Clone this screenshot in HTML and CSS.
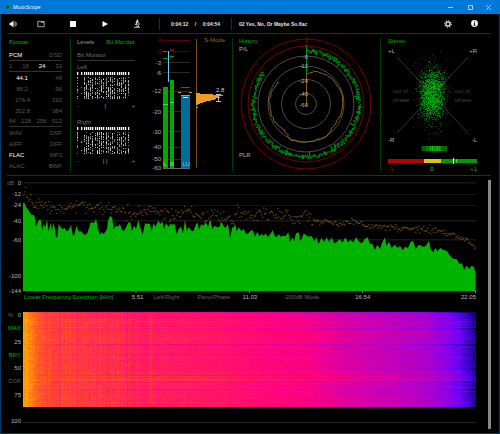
FILE: index.html
```html
<!DOCTYPE html>
<html lang="en">
<head>
<meta charset="utf-8">
<title>MusicScope</title>
<link rel="stylesheet" href="styles.css">
</head>
<body>
<div class="window">
  <header class="titlebar">
    <svg class="logo" width="6" height="6" viewBox="0 0 12 12"><circle cx="6" cy="6" r="6" fill="#0f8f86"/><path d="M3 9 5 3l2 5 2-4M6 2v8" stroke="#05313d" stroke-width="1.6" fill="none"/></svg>
    <h1>MusicScope</h1>
    <button aria-label="Minimize"><svg width="5" height="5" viewBox="0 0 5 5"><path d="M0 2.5h5"/></svg></button>
    <button aria-label="Maximize"><svg width="5" height="5" viewBox="0 0 5 5"><path d="M.5.5h4v4h-4z"/></svg></button>
    <button aria-label="Close"><svg width="5" height="5" viewBox="0 0 5 5"><path d="m.2.2 4.6 4.6m0-4.6L.2 4.8"/></svg></button>
  </header>

  <main class="content">
    <nav class="toolbar">
      <button class="volume" aria-label="Volume"><svg width="8" height="8" viewBox="0 0 16 16"><path d="M1 5.500h3L9 1v14l-5-4.500H1z" fill="#eee"/><path d="M11 5q2 3 0 6M13 3q3.500 5 0 10" stroke="#ddd" stroke-width="1.500" fill="none"/></svg></button>
      <button class="transport" aria-label="Open"><svg width="8" height="8" viewBox="0 0 16 16"><path d="M1.500 13.500v-11h5l1.500 2h6.500v9z" stroke="#ccc" stroke-width="1.600" fill="none"/><path d="M8 3h7" stroke="#ccc" stroke-width="1.600"/></svg></button>
      <button class="transport" aria-label="Stop"><svg width="6" height="6" viewBox="0 0 6 6"><path d="M0 0h6v6H0z" fill="#fff"/></svg></button>
      <button class="transport" aria-label="Play"><svg width="6" height="6" viewBox="0 0 6 6"><path d="M.5 0 6 3 .5 6z" fill="#fff"/></svg></button>
      <button class="transport" aria-label="Analyze"><svg width="8" height="9" viewBox="0 0 16 18"><path d="m8 1 3 1-3 8-3-1z" fill="#eee"/><path d="M10.500 6q4 4 0 8M4 11h5M2 16.500h12M6 14.500h6" stroke="#ddd" stroke-width="1.700" fill="none"/></svg></button>
      <div class="time"><span>0:04:12</span><span>/</span><span>0:04:54</span></div>
      <div class="track">02 Yes, No, Or Maybe So.flac</div>
      <button class="tool" aria-label="Settings"><svg width="8" height="8" viewBox="0 0 16 16"><circle cx="8" cy="8" r="4" stroke="#ccc" stroke-width="3" fill="none"/><circle cx="8" cy="8" r="6.400" stroke="#ccc" stroke-width="2.400" stroke-dasharray="2.500 2.520" fill="none"/></svg></button>
      <button class="tool" aria-label="Information"><svg width="7" height="7" viewBox="0 0 14 14"><circle cx="7" cy="7" r="6.800" fill="#fff"/><path d="M7 2.500v2M5.500 6H7v4.500M5 10.800h4" stroke="#000" stroke-width="1.800" fill="none"/></svg></button>
    </nav>

    <section class="panels">
      <section class="format">
        <h2>Format</h2>
        <div class="row ruled"><button class="on">PCM</button><button>DSD</button></div>
        <div class="row ruled"><button>1</button><button>16</button><button class="on">24</button><button>32</button></div>
        <div class="row rates"><button class="on">44.1</button><button>48</button></div>
        <div class="row rates"><button>88.2</button><button>96</button></div>
        <div class="row rates"><button>176.4</button><button>192</button></div>
        <div class="row rates"><button>352.8</button><button>384</button></div>
        <div class="row ruled"><button>64</button><button>128</button><button>256</button><button>512</button></div>
        <div class="row"><button>WAV</button><button>DSF</button></div>
        <div class="row"><button>AIFF</button><button>DFF</button></div>
        <div class="row"><button class="on">FLAC</button><button>MP3</button></div>
        <div class="row"><button>ALAC</button><button>BWF</button></div>
      </section>

      <section class="levels">
        <div class="bits">
          <div class="row tabs"><button class="tab">Levels</button><button class="tab active">Bit Monitor</button></div>
          <div class="row ruled"><span>Bit Monitor</span></div>
          <div class="row"><span>Left</span></div>
          <svg class="matrix" id="bits-left" viewBox="0 0 58 28"></svg>
          <div class="row balance"><span>-</span><span class="mark">|</span><span>+</span></div>
          <div class="row lower"><span>Right</span></div>
          <svg class="matrix" id="bits-right" viewBox="0 0 58 28"></svg>
          <div class="row balance"><span>-</span><span class="mark">| |</span><span>+</span></div>
        </div>
        <svg class="meter" viewBox="145 34 87 140">
          <g stroke="#2b2b2b"><path d="M163 62.500h27M163 72.500h27M163 91.500h27M163 111.500h27M163 131.500h27M163 147.500h27M163 159.500h27"/><path d="M163 168.500h27" stroke="#666"/></g>
          <path d="M163 40.500h27M163 51.500h27" stroke="#5c0000"/>
          <g class="scale" text-anchor="end">
            <text class="red" x="161" y="42">3</text><text class="red" x="161" y="53">0</text>
            <text x="161" y="65">-3</text><text x="161" y="75">-6</text><text x="161" y="93">-12</text><text x="161" y="114">-20</text><text x="161" y="134">-30</text><text x="161" y="149">-40</text><text x="161" y="161">-50</text><text x="161" y="170">-60</text>
          </g>
          <path d="M163 87h5v81h-5zM170 80h4v88h-4z" fill="#00a800"/>
          <path d="M163 104.500h5M170 102.500h4" stroke="#2bf52b"/>
          <path d="M163 58.500h4M170 56.500h4M163 51.500h4" stroke="#00a020"/>
          <path d="M170 49h4v2h-4z" fill="#900000"/>
          <path d="M168 51h1v31h-1z" fill="#6cc8f0"/>
          <path d="M181 95h9v73h-9z" fill="#006c9c"/>
          <path d="M181 95.500h9M178 92.500h3M189 92.500h3" stroke="#e39320"/>
          <path d="M183 97.500h5" stroke="#fff"/><path d="M181 87.500h9" stroke="#006c9c"/>
          <g class="barname" text-anchor="middle"><text x="165" y="166">L</text><text x="172" y="166">R</text><text x="186" y="166">LU</text></g>
          <path d="M196.500 39v129" stroke="#765012"/>
          <text class="smode" x="204" y="42">S-Mode</text>
          <path d="M196 93h4v1h13v1h10v1h-5v1h2v1h-4v1h-1v1h-4v1h-5v1h-3v1h-3v1h-2v1h-2v2h2v1h-2v-1z" fill="#eb9a24"/>
          <text class="value" x="216" y="92">2.8</text>
          <path d="M218.500 94v7M216 94.500h5M216 101.500h5" stroke="#bbb"/>
        </svg>
      </section>

      <section class="history">
        <svg viewBox="233 34 147 140">
          <g fill="none"><circle cx="306" cy="104" r="65" stroke="#7c0000"/><circle cx="306" cy="104" r="58" stroke="#7c0000"/><g stroke="#4b4b4b"><circle cx="306" cy="104" r="48"/><circle cx="306" cy="104" r="38"/><circle cx="306" cy="104" r="24.500"/><circle cx="306" cy="104" r="10.500"/></g></g>
          <path d="M306.500 45v35" stroke="#008a20"/><path d="M306.500 74v32" stroke="#8c5a18"/>
          <path id="peak-trace" stroke="#00a010" stroke-width=".8" fill="none"/>
          <path id="loudness-trace" stroke="#b87818" stroke-width=".8" fill="none"/>
          <g class="scale" text-anchor="end"><text class="red" x="308" y="42">3</text><text class="red" x="308" y="48">0</text><text x="308" y="59">-6</text><text x="308" y="68">-12</text><text x="308" y="83">-24</text><text x="308" y="96">-40</text><text x="308" y="107">-60</text></g>
          <text class="heading" x="239" y="43">History</text><text class="side" x="239" y="51">P/L</text><text class="side" x="239" y="157">PLR</text>
        </svg>
      </section>

      <section class="stereo">
        <svg viewBox="381 34 110 140">
          <text class="heading" x="388" y="43">Stereo</text>
          <path d="m397 57 71 76m0-76-71 76" stroke="#333" fill="none"/>
          <g class="faint"><text x="393" y="93">out of</text><text x="393" y="102">phase</text><text x="455" y="93">out of</text><text x="455" y="102">phase</text></g>
          <g id="cloud"></g>
          <g class="side"><text x="388" y="53">+L</text><text x="477" y="53" text-anchor="end">+R</text><text x="388" y="142">-R</text><text x="477" y="142" text-anchor="end">-L</text></g>
          <g id="pan"></g>
          <path d="M388 159h36v4h-36z" fill="#b80000"/><path d="M424 159h17v4h-17z" fill="#dcc800"/><path d="M441 159h36v4h-36z" fill="#009a00"/>
          <path d="M453 158h1v6h-1z" fill="#fff"/><path d="M456 159h1v4h-1z" fill="#6cc86c"/>
          <text class="red" x="388" y="171">-1</text><text class="yellow" x="432" y="171" text-anchor="middle">0</text><text class="heading" x="477" y="171" text-anchor="end">+1</text>
        </svg>
      </section>
    </section>

    <section class="analysis">
      <div class="charts">
        <svg class="axis" width="16" height="118" viewBox="7 176 16 118">
          <text class="dim" x="7" y="185">dB</text>
          <g text-anchor="end"><text x="21" y="185">0</text><text x="21" y="196">-12</text><text x="21" y="207">-24</text><text x="21" y="223">-40</text><text x="21" y="242">-60</text><text x="21" y="278">-100</text><text x="21" y="293">-144</text></g>
        </svg>
        <svg class="spectrum" viewBox="69 6 1359 354" preserveAspectRatio="none">
          <g id="grid"></g>
          <path id="spectrum-fill" fill="#00b400"/>
          <path id="spectrum-peak" stroke="#a87412" stroke-width="3" fill="none"/>
          <path d="M408 350v7M748 350v7M1088 350v7M1427 350v7" stroke="#888" stroke-width="3"/>
        </svg>
        <div class="legend">
          <button class="active">Linear Frequency Spectrum [kHz]</button><span class="tick">5.51</span><button>Left/Right</button><button>Pano/Phase</button><span class="tick">11.03</span><button>-200dB Mode</button><span class="tick">16.54</span><span class="tick last">22.05</span>
        </div>
        <div class="depth">
          <div><span class="dim">%</span><span>0</span></div><button class="active">MAX</button><span>25</span><button class="active">BRY</button><span>50</span><button>COF</button><span>75</span><span>&nbsp;</span><span>100</span>
        </div>
        <div class="gram"><canvas id="gram" width="453" height="95"></canvas></div>
      </div>
      <div class="scrollbar"></div>
    </section>
  </main>
</div>
<script src="script.js"></script>
</body>
</html>
```
FILE: styles.css
```css
* { box-sizing: border-box; }
body { margin: 0; background: #000; color: #b4b4b4; font: 6px/8px "Liberation Sans", Arial, sans-serif; }
button { margin: 0; padding: 0; border: 0; background: none; color: inherit; font: inherit; cursor: pointer; }
svg, canvas { display: block; }
h1, h2 { margin: 0; font: inherit; }
text { fill: #b4b4b4; }

.window { min-height: 100vh; display: flex; flex-direction: column; border: solid #063a66; border-width: 0 1px 1px; }
.titlebar { display: flex; align-items: center; height: 14px; margin: 0 -1px; padding: 0 6px 0 5px; background: #0078d7; color: #fff; }
.titlebar h1 { flex: 1; margin-left: 2px; font: 5px/8px "Open Sans", sans-serif; }
.titlebar button { width: 20px; display: flex; justify-content: center; }
.titlebar button:last-child { width: 14px; justify-content: flex-end; padding-right: 3px; }
.titlebar button path { fill: none; stroke: #d8ebfa; stroke-width: .8; }

.content { flex: 1; display: flex; flex-direction: column; padding: 0 8px 0 6px; }
.toolbar { display: flex; align-items: center; height: 20px; border-bottom: 1px solid #004a00; color: #fff; }
.toolbar button { display: flex; justify-content: center; }
.volume { width: 12px; margin-right: 6px; }
.transport { width: 32px; }
.time { display: flex; justify-content: space-between; width: 73px; margin-left: 6px; padding: 2px 11px; border: solid #004a00; border-width: 0 1px; }
.time, .track { color: #e4e4e4; font: bold 5px/8px "Liberation Sans", Arial, sans-serif; }
.track { flex: 1; padding-left: 7px; }
.tool { width: 26px; }
.tool:last-child { margin-right: 4px; }

.panels { display: grid; grid-template-columns: 63fr 162fr 148fr 111fr; height: 142px; border-bottom: 1px solid #004a00; }
.panels > section { min-width: 0; margin: 4px 0; border-left: 1px solid #003c00; }
.panels > .format { border: 0; padding: 0 8px 0 2px; }
.panels section > svg { width: 100%; height: 140px; margin: -4px 0; }
h2, .tab.active, .legend .active, .depth .active { color: #00b400; }
h2 { line-height: 8px; margin-bottom: 4px; }
.row { display: flex; justify-content: space-between; height: 11px; align-items: center; color: #585858; }
.row .on { color: #fff; }
.ruled { border-bottom: 1px solid #333; }
.rates { padding-left: 6px; }
.rates button:first-child { width: 14px; text-align: center; }

.levels { display: grid; grid-template-columns: 74fr 87fr; }
.bits { padding: 0 10px 0 6px; }
.row.tabs { height: 8px; margin-bottom: 4px; }
.tab { color: #999; }
.bits .row { color: #707070; }
.bits .matrix { width: 100%; height: 28px; shape-rendering: crispEdges; }
.balance .mark { color: #aaa; }
.row.lower { margin-top: 5px; }
.bits .balance { color: #888; }
text.red { fill: #a80000; }
text.yellow { fill: #b0a000; }
.barname text { fill: #9fe09f; }
.barname text:last-child { fill: #9cc8dc; }
text.smode { fill: #9c6814; }
text.value { fill: #ccc; }
text.heading { fill: #00b400; }
.faint text { fill: #404040; }
text.dim, .dim { fill: #606060; color: #606060; }

.analysis { flex: 1; display: flex; padding: 4px 0; }
.charts { flex: 1; display: grid; grid-template-columns: 16px 1fr; align-content: start; margin-right: 12px; }
.axis { margin-top: -4px; }
.spectrum { width: 100%; height: 118px; margin-top: -4px; }
.legend { grid-column: 2; display: grid; grid-template-columns: 108fr 22fr 44fr 45fr 41fr 72fr 20fr 101fr; align-items: start; height: 18px; padding-left: 1px; color: #606060; white-space: nowrap; margin-top: -1px; margin-bottom: 1px; }
.legend button { text-align: left; }
.legend .tick { color: #b4b4b4; }
.legend .last { text-align: right; }
.depth { display: flex; flex-direction: column; justify-content: space-between; align-items: flex-end; height: 114px; margin-top: -1px; padding-right: 2px; }
.depth > div { align-self: stretch; display: flex; justify-content: space-between; padding-left: 1px; }
.depth button { color: #606060; }
.gram { height: 111px; border-bottom: 1px solid #222; }
.gram canvas { width: 100%; height: 95px; }
.scrollbar { width: 3px; background: #888; }
```
FILE: script.js
```js
let seed = 7;
const rand = () => (seed = (seed * 16807) % 2147483647) / 2147483647;
const gauss = () => rand() + rand() + rand() + rand() - 2;
const byId = id => document.getElementById(id);
const pairs = s => s.split(' ').map(p => p.split(',').map(Number));
const rect = (x, y, w, h, fill) => `<rect x="${x}" y="${y}" width="${w}" height="${h}" fill="${fill}"/>`;
const interp = (pts, x) => {
  let i = 1;
  while (i < pts.length - 1 && pts[i][0] < x) i++;
  const [a, b] = [pts[i - 1], pts[i]];
  return a[1] + (b[1] - a[1]) * Math.max(0, Math.min(1, (x - a[0]) / (b[0] - a[0])));
};

// Bit activity matrices: a header row, then one dot column per bit.
for (const id of ['bits-left', 'bits-right']) {
  let out = '';
  for (let i = 0; i < 24; i++) {
    if (i === 1) continue;
    const x = Math.round(i * 2.2);
    out += rect(x, 0, 1, 3, '#fff') + rect(x + 1, 0, 1, 3, '#555');
    for (let y = 5; y < 27; y++) {
      if (i > 2 ? rand() < .66 : i === 0 ? rand() < .6 : rand() < .1) {
        const shade = 90 + Math.floor(rand() * 130);
        out += rect(x, y, 1, 1, `rgb(${shade},${shade},${shade})`);
      }
    }
  }
  byId(id).innerHTML = out;
}

// Polar history traces, clockwise from the top.
let peak = '';
for (let a = 0; a < 308; a += .55) {
  const r = 54.500 - Math.abs(gauss()) * 3.5 + (rand() < .5 ? 1 : -1);
  const t = a * Math.PI / 180;
  peak += (peak ? 'L' : 'M') + (306 + r * Math.sin(t)).toFixed(1) + ' ' + (104 - r * Math.cos(t)).toFixed(1);
}
byId('peak-trace').setAttribute('d', peak);
const loud = pairs('225,118 250,112 285,122 305,140 330,180 333,215 325,245 300,285 280,310 240,322 210,325 175,318 165,298 150,283 130,265 115,235 112,200 118,175 137,147');
let path = '';
loud.forEach(([x, y], i) => {
  const next = loud[i + 1] || [x, y];
  for (let k = 0; k < 5; k++) {
    const px = 232 + (x + (next[0] - x) * k / 5) / 3 + gauss() * .6;
    const py = 34 + (y + (next[1] - y) * k / 5) / 3 + gauss() * .6;
    path += (path ? 'L' : 'M') + px.toFixed(1) + ' ' + py.toFixed(1);
  }
});
byId('loudness-trace').setAttribute('d', path);

// Stereo goniometer cloud and pan strip.
let dots = '';
for (let i = 0; i < 2800; i++) {
  const wide = i % 3 === 0;
  const x = 432 + (wide ? gauss() * 13 : (rand() * 1.3 + rand() * .7 - 1) * 14);
  const y = 94 + (wide ? gauss() * 28 : (rand() * 1.3 + rand() * .7 - 1) * 26);
  dots += rect(Math.round(x), Math.round(y), 1, 1, `rgba(0,${150 + Math.floor(rand() * 90)},10,${(.1 + rand() * .35).toFixed(2)})`);
}
byId('cloud').innerHTML = dots;
let pan = '';
for (let x = 421; x < 447; x++) {
  const g = 230 - Math.abs(x - 435) * 9 - rand() * 90;
  pan += rect(x, 146, 1, 5, `rgb(0,${Math.max(20, Math.round(g))},0)`);
}
byId('pan').innerHTML = pan;

// Frequency spectrum.
byId('grid').innerHTML = [25, 60, 93, 139, 196, 305].map(y => rect(69, y, 1359, 3, y === 60 || y === 93 ? '#141414' : '#242424')).join('');
const env = '68,90 72,85 78,98 86,110 94,122 103,124 108,158 113,145 118,137 122,137 127,168 131,150 136,160 141,137 146,172 152,145 156,170 160,148 163,155 168,190 172,188 176,150 182,160 188,165 194,162 200,172 206,168 213,152 219,187 224,180 229,155 236,172 244,172 250,180 256,182 262,178 268,160 272,145 278,146 284,145 288,133 293,160 299,183 305,175 311,180 317,172 321,165 324,140 330,126 336,130 341,165 348,155 354,158 360,150 366,168 373,170 380,155 386,145 391,145 396,172 402,155 408,165 415,138 420,158 428,182 435,148 443,150 450,150 455,172 460,148 466,158 475,140 481,150 487,142 492,165 498,148 505,158 512,150 518,152 524,150 530,180 536,165 543,158 549,178 555,138 561,170 567,160 574,170 580,172 586,155 592,145 598,168 603,150 610,155 617,145 624,158 631,136 637,165 644,155 651,160 658,160 664,142 670,155 676,162 684,150 690,193 697,160 702,160 705,148 710,172 716,160 724,172 731,165 737,178 743,180 750,172 758,168 765,188 772,173 778,187 785,180 792,185 797,178 803,190 810,182 818,168 824,185 830,190 836,180 842,188 849,185 857,186 865,175 870,205 877,190 882,202 888,178 896,175 900,200 905,195 911,178 920,185 927,188 935,186 943,202 949,190 956,210 964,192 973,203 980,190 988,205 995,190 1002,208 1010,205 1018,195 1028,205 1036,190 1043,205 1052,198 1060,205 1068,190 1077,203 1086,208 1094,195 1103,190 1110,210 1117,210 1124,228 1132,212 1140,225 1147,205 1155,190 1159,215 1167,203 1175,222 1184,212 1193,222 1200,215 1208,228 1216,218 1224,222 1231,205 1239,200 1247,225 1256,212 1264,215 1272,220 1280,212 1286,200 1292,225 1300,235 1306,222 1313,232 1321,222 1330,228 1340,230 1350,245 1360,255 1370,255 1378,270 1386,268 1392,288 1400,275 1408,285 1415,275 1422,280 1427,300';
byId('spectrum-fill').setAttribute('d', 'M68 351L' + env.replace(/ /g, 'L') + 'L1427 351Z');
const hold = pairs('68,60 80,68 100,85 125,95 160,103 250,97 350,105 400,122 440,110 520,125 560,108 600,130 640,122 700,140 720,112 760,130 790,125 850,120 900,145 914,110 945,148 970,140 1020,150 1070,140 1110,158 1200,162 1300,168 1350,180 1400,198 1427,225');
let marks = '';
for (let x = 70; x < 1427; x += 3) {
  const y = interp(hold, x) + gauss() * (x < 950 ? 17 : 9);
  marks += `M${x} ${y.toFixed(0)}h3`;
}
byId('spectrum-peak').setAttribute('d', marks);

// Spectrogram: level falls with frequency, varied per column and per row.
const palette = [[0, 15, 0, 110], [.1, 60, 0, 200], [.2, 115, 0, 250], [.32, 165, 0, 210], [.46, 205, 0, 175], [.6, 255, 0, 128], [.72, 255, 24, 98], [.84, 255, 72, 48], [.93, 255, 120, 20], [1, 255, 165, 0]];
const level = pairs('0,1 6,.97 14,.88 28,.82 60,.8 100,.77 120,.74 190,.71 230,.65 280,.6 320,.51 370,.43 400,.37 425,.26 438,.18 446,.1 453,.02');
const channel = [1, 2, 3].map(c => palette.map(p => [p[0], p[c]]));
const canvas = byId('gram'), ctx = canvas.getContext('2d');
const image = ctx.createImageData(453, 95);
const cols = Array.from({ length: 453 }, () => gauss() * .022);
let grain = 0;
for (let y = 0; y < 95; y++) {
  const rowShift = gauss() * .04 + (y > 60 && y < 69 ? .03 : 0) - (y === 32 || y === 63 ? .07 : 0) - (y < 9 ? .03 : 0) - (y === 0 ? .12 : 0);
  for (let x = 0; x < 453; x++) {
    if (x % 2 === 0) grain = gauss() * .03;
    const v = interp(level, x) + rowShift * Math.min(1, .3 + x / 220) + cols[x] * (x < 130 ? 1.3 : .4) + grain;
    const o = (y * 453 + x) * 4;
    channel.forEach((c, k) => { image.data[o + k] = interp(c, v); });
    image.data[o + 3] = 255;
  }
}
ctx.putImageData(image, 0, 0);
```
